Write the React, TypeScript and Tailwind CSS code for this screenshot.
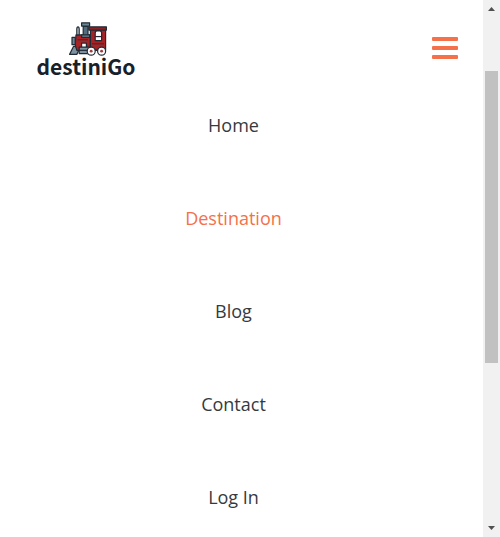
import React from 'react';

const links = ['Home', 'Destination', 'Blog', 'Contact', 'Log In'];

function Train() {
  return (
    <svg viewBox="0 0 50 42" className="h-[34px] w-[40px]" preserveAspectRatio="none" aria-hidden="true">
      <g stroke="#202b35" strokeWidth="1.5" strokeLinejoin="round">
        <path d="M9 30H7L2 40h9l3-6z" fill="#7d929e" />
        <path d="M10 16h18v19H11l-2-7z" fill="#a82325" />
        <path d="M28 8h19v27H28z" fill="#a82325" />
        <path d="M26 6h22v4H26z" fill="#8a2224" />
        <path d="M19 5h6v12h-6z" fill="#526d7d" />
        <path d="M17 1h10v4H17z" fill="#6d8796" />
        <path d="M17 16h10v3H17z" fill="#6d8796" />
        <path d="M11 9q0-3 1.500-3t1.500 3v7h-3z" fill="#c9d1d5" />
        <path d="M5 19h4v9H5z" fill="#6d8796" />
        <path d="M34 14q0-3 2-3h4q2 0 2 3v9h-8z" fill="#fff" />
        <path d="M34 18h8" />
        <path d="M17 26h6v6h-6z" fill="#fff" />
        <path d="M14 31h12v8H14z" fill="#7d929e" />
        <path d="M14 35h33" fill="none" />
        <circle cx="29" cy="36" r="5" fill="#fff" />
        <circle cx="42" cy="36" r="5" fill="#fff" />
      </g>
      <g fill="#a43b3f">
        <circle cx="29" cy="36" r="1.8" />
        <circle cx="42" cy="36" r="1.8" />
      </g>
      <path d="M12 22h13M30 27h15" stroke="#202b35" strokeWidth="1" />
    </svg>
  );
}

export default function App() {
  return (
    <div className="flex h-screen overflow-hidden bg-white font-['Open_Sans','Noto_Sans',sans-serif]">
      <div className="min-w-0 flex-1">
        <header className="flex h-[79px] items-start justify-between pl-9 pr-[25px] pt-[22px]">
          <a href="#home" className="flex w-[100px] flex-col items-center text-[#18212a]">
            <span className="pl-1"><Train /></span>
            <span className="text-[21px] font-bold leading-[20px] font-['Noto_Sans_CJK_SC',sans-serif]">destiniGo</span>
          </a>
          <button aria-label="Menu" className="mt-[15px] flex w-[26px] flex-col gap-[5px]">
            <span className="h-1 w-full rounded-[1px] bg-[#f4714a]" />
            <span className="h-1 w-full rounded-[1px] bg-[#f4714a]" />
            <span className="h-1 w-full rounded-[1px] bg-[#f4714a]" />
          </button>
        </header>
        <nav className="pr-4">
          <ul className="text-center text-[18px] font-normal leading-[93px] text-[#363a3e]">
            {links.map((label) => (
              <li key={label} className={label === 'Destination' ? 'text-[#f4714a]' : ''}>
                <a href={'#' + label.toLowerCase().replace(' ', '-')}>{label}</a>
              </li>
            ))}
          </ul>
        </nav>
      </div>
      <div className="flex w-[17px] shrink-0 flex-col items-center bg-[#f1f1f1]" aria-hidden="true">
        <svg viewBox="0 0 17 17" className="size-[17px]"><path d="M5 11h7L8.500 7z" fill="#505050" /></svg>
        <div className="min-h-0 w-full flex-1 px-[2px] pt-[54px]">
          <div className="h-[65%] w-full bg-[#c1c1c1]" />
        </div>
        <svg viewBox="0 0 17 17" className="size-[17px]"><path d="M5 6h7l-3.500 4z" fill="#505050" /></svg>
      </div>
    </div>
  );
}
